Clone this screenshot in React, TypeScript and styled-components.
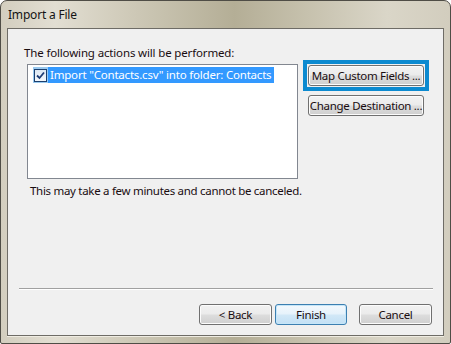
import React from "react";
import styled, { createGlobalStyle } from "styled-components";

const Global = createGlobalStyle`
    html, body {
        margin: 0;
        padding: 0;
        background: #ffffff;
    }
    body {
        font-family: "Noto Sans", "DejaVu Sans", sans-serif;
        font-size: 12px;
        color: #1e1e1e;
    }
`;

// outer aero-basic frame, beige glass
const Window = styled.div`
    width: 451px;
    height: 344px;
    box-sizing: border-box;
    display: flex;
    flex-direction: column;
    border: 1px solid #4f4d46;
    border-radius: 7px 7px 2px 2px;
    overflow: hidden;
    background: linear-gradient(
        90deg,
        #d3cebf 0%,
        #e2ded2 12%,
        #cdc8b6 30%,
        #b4ae96 52%,
        #c6c1ad 68%,
        #dad6c8 86%,
        #d2cdbe 100%
    );
`;

const TitleBar = styled.div`
    height: 27px;
    flex: none;
    display: flex;
    align-items: center;
    padding-left: 7px;
    font-size: 12px;
    color: #141414;
    letter-spacing: -0.2px;
`;

const Client = styled.div`
    flex: 1;
    margin: 0 6px 7px 6px;
    border: 1px solid #6e6c66;
    background: #f0f0f0;
    display: flex;
    flex-direction: column;
    padding: 16px 0 10px 0;
    box-shadow: 0 1px 0 #efece2;
`;

const Label = styled.div`
    height: 16px;
    line-height: 16px;
    margin-left: 16px;
    font-size: 11.5px;
    letter-spacing: -0.15px;
    color: #1a0d10;
`;

const ActionRow = styled.div`
    display: flex;
    margin-top: -1px;
    margin-left: 19px;
`;

const ListBox = styled.div`
    width: 271px;
    height: 115px;
    margin-top: 4px;
    box-sizing: border-box;
    border: 1px solid #828790;
    background: #ffffff;
    padding: 1px 0 0 5px;
`;

const ListItem = styled.div`
    display: flex;
    align-items: stretch;
    height: 16px;
    margin-top: 1px;
`;

const CheckCell = styled.div`
    width: 15px;
    display: flex;
    align-items: center;
    justify-content: center;
    background: #99c9ef;
`;

const CheckBox = styled.div`
    width: 11px;
    height: 11px;
    border: 1px solid #1c3f6e;
    background: linear-gradient(180deg, #dce8f4, #f4f8fc);
    display: flex;
    align-items: center;
    justify-content: center;
`;

const ItemText = styled.div`
    background: #3399ff;
    color: #ffffff;
    padding: 0 3px 0 2px;
    line-height: 16px;
    font-size: 11.5px;
    letter-spacing: -0.2px;
    white-space: nowrap;
`;

const SideButtons = styled.div`
    display: flex;
    flex-direction: column;
    margin-left: 5px;
    gap: 4px;
`;

const FocusRing = styled.div`
    border: 4px solid #0c8ad0;
    padding: 1px;
    width: fit-content;
`;

const Button = styled.button<{ $width: number; $default?: boolean }>`
    width: ${(p) => p.$width}px;
    height: 21px;
    box-sizing: border-box;
    padding: 0;
    white-space: nowrap;
    font-family: "Noto Sans", "DejaVu Sans", sans-serif;
    font-size: 11.5px;
    letter-spacing: -0.3px;
    color: #1a0d10;
    border-radius: 3px;
    border: 1px solid ${(p) => (p.$default ? "#3c7fb1" : "#707070")};
    background: ${(p) =>
        p.$default
            ? "linear-gradient(180deg, #f4f9fd 0%, #e6f2fb 48%, #d2e8f7 52%, #c2e0f5 100%)"
            : "linear-gradient(180deg, #f2f2f2 0%, #ebebeb 48%, #dddddd 52%, #cfcfcf 100%)"};
    box-shadow: inset 0 0 0 1px ${(p) => (p.$default ? "#c6e6f8" : "#fcfcfc")};
    cursor: default;
`;

const SideButtonWrap = styled.div`
    margin-left: 5px;
`;

const Note = styled.div`
    margin: 4px 0 0 22px;
    height: 16px;
    line-height: 16px;
    font-size: 11.5px;
    letter-spacing: -0.3px;
    color: #1a0d10;
`;

const Footer = styled.div`
    margin-top: auto;
    display: flex;
    flex-direction: column;
`;

const Separator = styled.div`
    height: 1px;
    margin: 0 10px 0 11px;
    background: #a0a0a0;
    border-bottom: 1px solid #ffffff;
`;

const ButtonBar = styled.div`
    display: flex;
    justify-content: flex-end;
    padding: 14px 11px 0 0;
    gap: 3px;
`;

const Spacer = styled.div`
    width: 6px;
`;

const Check = () => (
    <svg width="9" height="9" viewBox="0 0 9 9">
        <path d="M1 4.5 L3.5 7 L8 1.5" fill="none" stroke="#1e3d76" strokeWidth="1.8" />
    </svg>
);

export default function App() {
    return (
        <>
            <Global />
            <Window>
                <TitleBar>Import a File</TitleBar>
                <Client>
                    <Label>The following actions will be performed:</Label>
                    <ActionRow>
                        <ListBox>
                            <ListItem>
                                <CheckCell>
                                    <CheckBox>
                                        <Check />
                                    </CheckBox>
                                </CheckCell>
                                <ItemText>Import "Contacts.csv" into folder: Contacts</ItemText>
                            </ListItem>
                        </ListBox>
                        <SideButtons>
                            <FocusRing>
                                <Button $width={116}>Map Custom Fields ...</Button>
                            </FocusRing>
                            <SideButtonWrap>
                                <Button $width={116}>Change Destination ...</Button>
                            </SideButtonWrap>
                        </SideButtons>
                    </ActionRow>
                    <Note>This may take a few minutes and cannot be canceled.</Note>
                    <Footer>
                        <Separator />
                        <ButtonBar>
                            <Button $width={73}>&lt; Back</Button>
                            <Button $width={72} $default>
                                Finish
                            </Button>
                            <Spacer />
                            <Button $width={73}>Cancel</Button>
                        </ButtonBar>
                    </Footer>
                </Client>
            </Window>
        </>
    );
}
